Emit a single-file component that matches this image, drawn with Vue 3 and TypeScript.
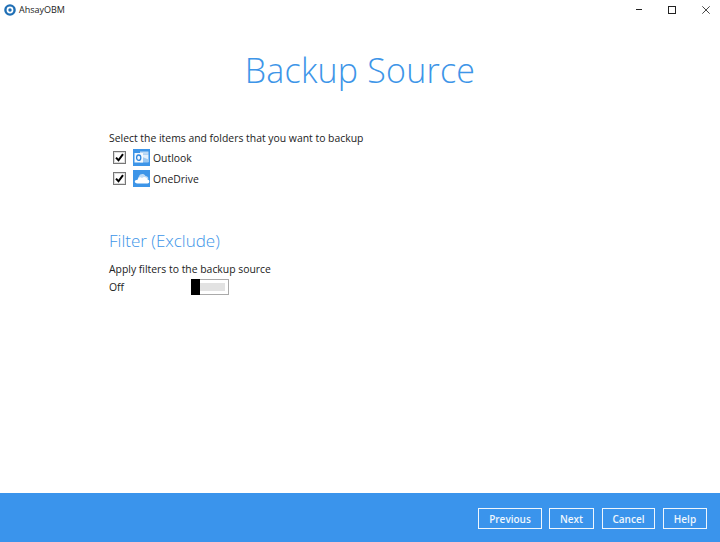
<script setup lang="ts">
const items = [
  { name: 'Outlook', icon: 'outlook' },
  { name: 'OneDrive', icon: 'onedrive' },
]
const buttons = ['Previous', 'Next', 'Cancel', 'Help']
</script>

<template>
  <div class="window">
    <header class="titlebar">
      <div class="app">
        <svg class="logo" width="12" height="12" viewBox="0 0 12 12">
          <circle cx="6" cy="6" r="4.600" fill="none" stroke="#1f6fb5" stroke-width="2.400" />
          <circle cx="6" cy="6" r="1.700" fill="#1f6fb5" />
        </svg>
        <span>AhsayOBM</span>
      </div>
      <div class="controls">
        <svg width="8" height="8" viewBox="0 0 8 8"><path d="M2 3.500H8" stroke="#222" fill="none" /></svg>
        <svg width="8" height="8" viewBox="0 0 8 8"><rect x="0.500" y="0.500" width="7" height="7" stroke="#222" fill="none" /></svg>
        <svg width="8" height="8" viewBox="0 0 8 8"><path d="M0.300 0.300L7.700 7.700M7.700 0.300L0.300 7.700" stroke="#333" fill="none" stroke-width="0.900" /></svg>
      </div>
    </header>

    <main class="content">
      <h1>Backup Source</h1>
      <section class="source">
        <p class="label">Select the items and folders that you want to backup</p>
        <div v-for="item in items" :key="item.name" class="row">
          <span class="check">
            <svg width="9" height="9" viewBox="0 0 9 9"><path d="M1 4.600L3.500 7.300L8 1.200" fill="none" stroke="#000" stroke-width="2" /></svg>
          </span>
          <span class="app-icon">
            <svg v-if="item.icon === 'outlook'" width="17" height="17" viewBox="0 0 17 17">
              <rect x="7" y="2.500" width="8.500" height="3" fill="#bcd9f5" />
              <rect x="7" y="5.500" width="8.500" height="7.500" fill="#e3f0fc" />
              <path d="M7 7L15.500 10.500V13.500H7Z" fill="#9cc8f1" />
              <rect x="1.500" y="4" width="8.500" height="9.500" fill="#f4f9fe" />
              <ellipse cx="5.700" cy="8.700" rx="2.100" ry="2.700" fill="none" stroke="#2f86dd" stroke-width="1.300" />
            </svg>
            <svg v-else width="17" height="17" viewBox="0 0 17 17">
              <path d="M6 6.500C7 3.500 11 3.300 12.500 6C14 6 15.300 7 15.500 8.500L10 11L5 7.500Z" fill="#bcdaf6" />
              <path d="M4.500 13.500H14.500C16.800 13.500 17 10 14.700 9.500C14 7.200 11 6.300 9 8C7.200 6.600 4.700 7.700 4.600 9.800C1 9.800 0.800 13.500 4.500 13.500Z" fill="#fff" />
            </svg>
          </span>
          <span class="name">{{ item.name }}</span>
        </div>
      </section>

      <section class="filter">
        <h2>Filter (Exclude)</h2>
        <p class="label">Apply filters to the backup source</p>
        <div class="toggle-row">
          <span class="off">Off</span>
          <span class="toggle"><span class="knob"></span><span class="track"></span></span>
        </div>
      </section>
    </main>

    <footer class="footer">
      <button v-for="b in buttons" :key="b" type="button" :class="['btn', b.toLowerCase()]">{{ b }}</button>
    </footer>
  </div>
</template>

<style>
html, body { margin: 0; padding: 0; background: #fff; }
</style>

<style scoped>
.window {
  width: 720px;
  height: 542px;
  display: flex;
  flex-direction: column;
  background: #fff;
  font-family: "Open Sans", "Noto Sans", sans-serif;
  color: #222;
  overflow: hidden;
}
.titlebar {
  height: 20px;
  flex: none;
  display: flex;
  justify-content: space-between;
  align-items: flex-start;
}
.app {
  display: flex;
  align-items: center;
  gap: 3px;
  padding: 4px 0 0 4px;
  font-size: 9px;
  line-height: 12px;
}
.controls {
  display: flex;
  gap: 26px;
  padding: 6px 10px 0 0;
}
.controls svg { display: block; }
.content {
  flex: 1;
  display: flex;
  flex-direction: column;
}
h1 {
  margin: 28px 0 0;
  text-align: center;
  font-weight: 300;
  font-size: 34px;
  line-height: 44px;
  letter-spacing: 0.200px;
  color: #3d95e8;
}
.source { padding: 38px 0 0 109px; }
.source .label { margin-bottom: 1px; }
.label {
  margin: 0;
  font-size: 10.400px;
  line-height: 16px;
}
.row {
  display: flex;
  align-items: center;
  height: 21px;
}
.check {
  box-sizing: border-box;
  width: 13px;
  height: 13px;
  margin-left: 4px;
  border: 1px solid #777;
  box-shadow: inset 0 0 0 1px #ddd;
  background: #fff;
  display: flex;
  align-items: center;
  justify-content: center;
}
.app-icon {
  width: 17px;
  height: 17px;
  margin-left: 7px;
  background: #3d95e8;
  display: block;
}
.app-icon svg { display: block; }
.name {
  margin-left: 3px;
  font-size: 10.400px;
}
.filter { padding: 41px 0 0 109px; }
h2 {
  margin: 0;
  font-weight: 300;
  font-size: 17px;
  line-height: 22px;
  color: #3d95e8;
}
.filter .label { margin-top: 9px; }
.toggle-row {
  display: flex;
  align-items: center;
  height: 16px;
  margin-top: 2px;
}
.off {
  width: 82px;
  font-size: 10.400px;
}
.toggle {
  box-sizing: border-box;
  width: 38px;
  height: 16px;
  border: 1px solid #aaa;
  border-left: none;
  display: flex;
  background: #fff;
}
.knob { width: 9px; background: #000; margin-top: -1px; margin-bottom: -1px; }
.track { width: 25px; margin: 3px 0; background: #e2e2e2; }
.footer {
  height: 49px;
  flex: none;
  box-sizing: border-box;
  background: #3a94ec;
  display: flex;
  justify-content: flex-end;
  gap: 8px;
  padding: 15px 13px 0 0;
}
.btn {
  box-sizing: border-box;
  height: 21px;
  padding: 0;
  background: transparent;
  border: 1px solid #eef6fd;
  color: #eef6fd;
  font-family: inherit;
  font-size: 10px;
  font-weight: 600;
}
.previous { width: 64px; margin-right: -1px; }
.next { width: 45px; }
.cancel { width: 53px; }
.help { width: 44px; }
</style>
